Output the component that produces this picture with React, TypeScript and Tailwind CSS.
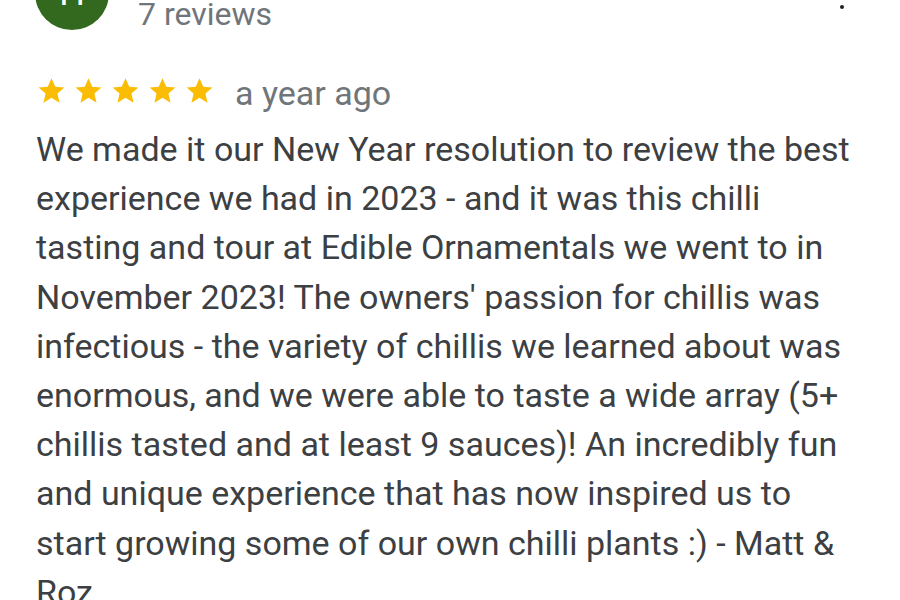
import React from 'react';

const Star = () => (
  <svg viewBox="0 0 24 24" className="w-[31px] h-[31px]" fill="#fbbc04">
    <path d="M12 2.5l2.9 6.6 7.1.6-5.4 4.7 1.6 7-6.2-3.7-6.2 3.7 1.6-7L2 9.7l7.1-.6z" />
  </svg>
);

export default function App() {
  const review =
    "We made it our New Year resolution to review the best experience we had in 2023 - and it was this chilli tasting and tour at Edible Ornamentals we went to in November 2023! The owners' passion for chillis was infectious - the variety of chillis we learned about was enormous, and we were able to taste a wide array (5+ chillis tasted and at least 9 sauces)! An incredibly fun and unique experience that has now inspired us to start growing some of our own chilli plants :) - Matt & Roz";

  return (
    <div className="w-[900px] h-[600px] overflow-hidden bg-white font-['Roboto',sans-serif]">
      <div className="h-[74px] mt-[-44px] pl-[35px] pr-[56px] flex items-end">
        <div className="w-[74px] h-[74px] shrink-0 rounded-full bg-[#33691e] flex items-center justify-center text-white text-[36px]">
          H
        </div>
        <div className="ml-[29px] flex-1 flex flex-col leading-[36px] mb-[-2px]">
          <span className="text-[32px] text-[#202124]">Henry</span>
          <span className="text-[32px] text-[#70757a]">7 reviews</span>
        </div>
        <div className="flex flex-col gap-[6px] pb-[21px]">
          <span className="w-[4px] h-[4px] rounded-full bg-[#202124]" />
          <span className="w-[4px] h-[4px] rounded-full bg-[#202124]" />
          <span className="w-[4px] h-[4px] rounded-full bg-[#202124]" />
        </div>
      </div>

      <div className="mt-[42px] h-[36px] pl-[36px] flex items-center">
        <div className="flex gap-[6px]">
          <Star />
          <Star />
          <Star />
          <Star />
          <Star />
        </div>
        <span className="ml-[20px] text-[34px] text-[#70757a] leading-[36px] pt-[6px]">a year ago</span>
      </div>

      <p className="mt-[17px] pl-[36px] w-[856px] text-[34px] leading-[49.2px] text-[#3c4043]">
        {review}
      </p>
    </div>
  );
}
